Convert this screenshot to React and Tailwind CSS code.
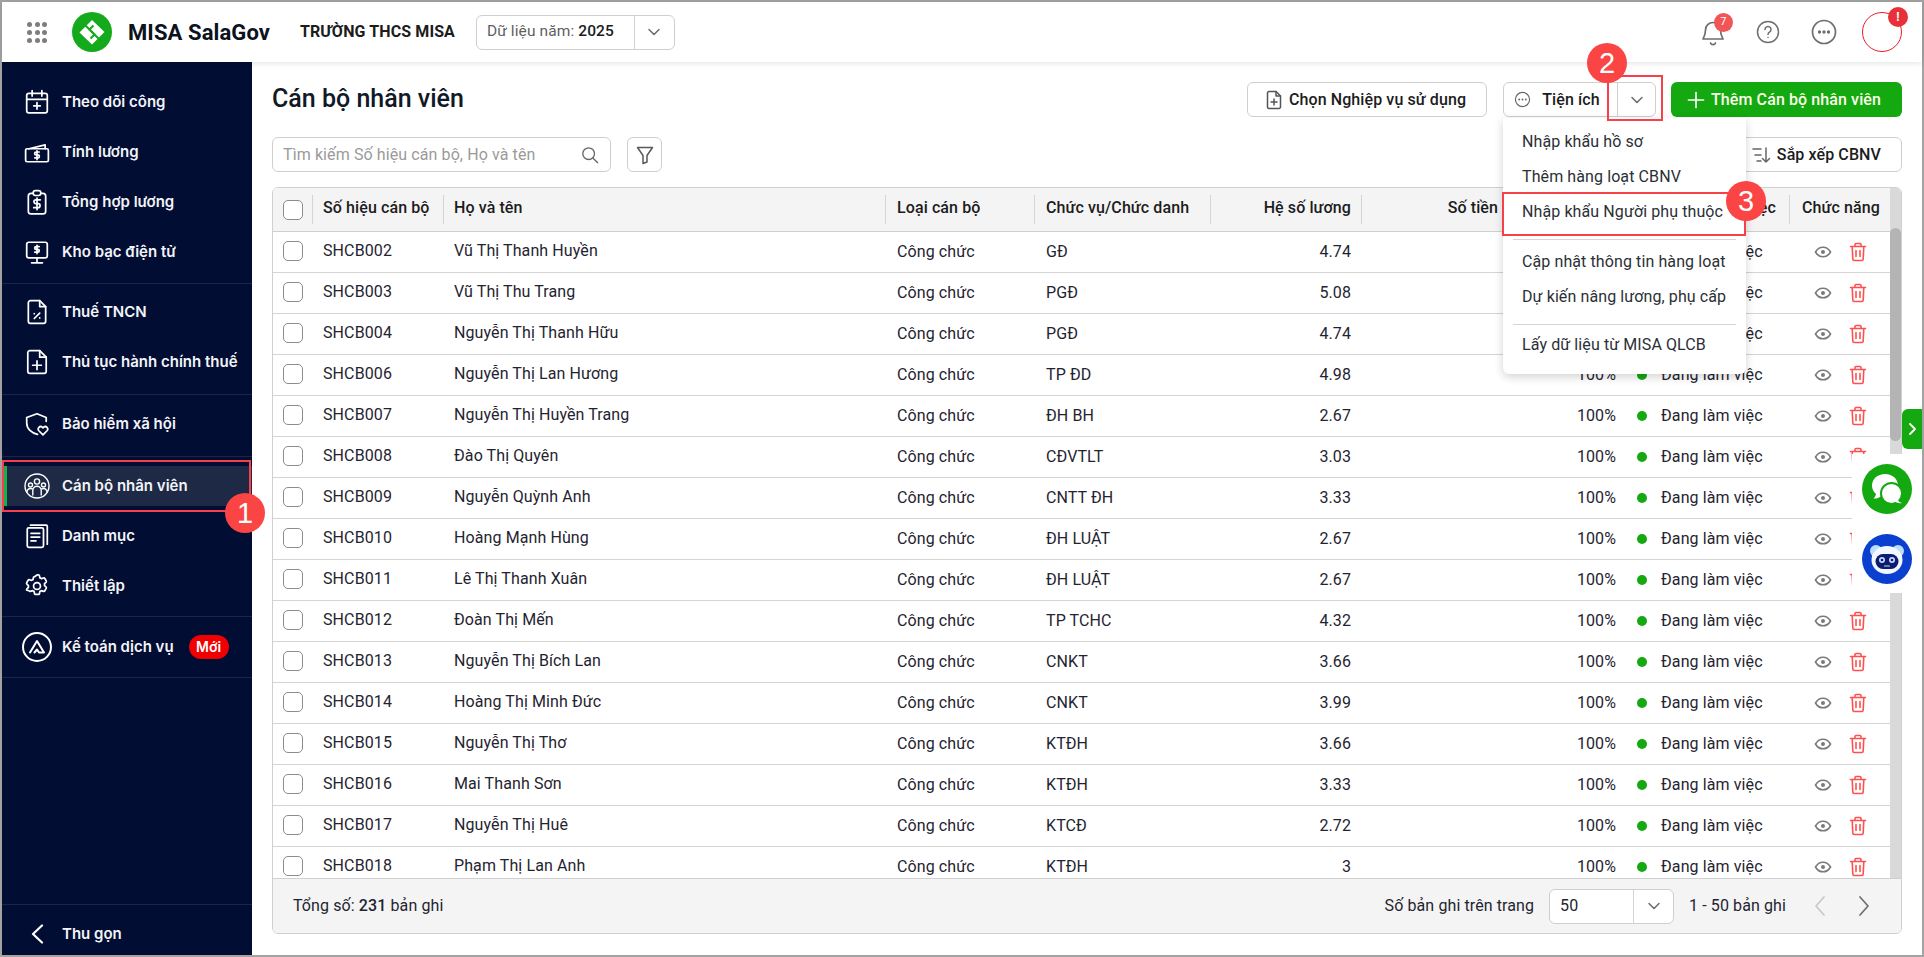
import React from "react";

const rows = [
  ["SHCB002", "Vũ Thị Thanh Huyền", "GĐ", "4.74"],
  ["SHCB003", "Vũ Thị Thu Trang", "PGĐ", "5.08"],
  ["SHCB004", "Nguyễn Thị Thanh Hữu", "PGĐ", "4.74"],
  ["SHCB006", "Nguyễn Thị Lan Hương", "TP ĐD", "4.98"],
  ["SHCB007", "Nguyễn Thị Huyền Trang", "ĐH BH", "2.67"],
  ["SHCB008", "Đào Thị Quyên", "CĐVTLT", "3.03"],
  ["SHCB009", "Nguyễn Quỳnh Anh", "CNTT ĐH", "3.33"],
  ["SHCB010", "Hoàng Mạnh Hùng", "ĐH LUẬT", "2.67"],
  ["SHCB011", "Lê Thị Thanh Xuân", "ĐH LUẬT", "2.67"],
  ["SHCB012", "Đoàn Thị Mến", "TP TCHC", "4.32"],
  ["SHCB013", "Nguyễn Thị Bích Lan", "CNKT", "3.66"],
  ["SHCB014", "Hoàng Thị Minh Đức", "CNKT", "3.99"],
  ["SHCB015", "Nguyễn Thị Thơ", "KTĐH", "3.66"],
  ["SHCB016", "Mai Thanh Sơn", "KTĐH", "3.33"],
  ["SHCB017", "Nguyễn Thị Huê", "KTCĐ", "2.72"],
  ["SHCB018", "Phạm Thị Lan Anh", "KTĐH", "3"],
];

const COLS = "grid grid-cols-[40px_131px_442px_149px_176px_151px_139px_128px_161px_102px]";

const S = ({ children, size = 26, sw = 1.6, color = "currentColor", className = "" }) => (
  <svg width={size} height={size} viewBox="0 0 24 24" fill="none" stroke={color} strokeWidth={sw} strokeLinecap="round" strokeLinejoin="round" className={className}>
    {children}
  </svg>
);

const IconCalendar = () => (
  <S><rect x="2.5" y="4" width="19" height="18" rx="2" /><path d="M2.5 9.5h19M7.5 1.5v5M16.5 1.5v5M12 12.5v6M9 15.5h6" /></S>
);
const IconWallet = () => (
  <S><path d="M4.5 9 19.5 5.5V9" /><rect x="1.5" y="9" width="21" height="12" rx="1.5" /><path d="M14 12h-2.8a1.3 1.3 0 0 0 0 2.7h1.6a1.3 1.3 0 0 1 0 2.7H10M12 11v8" /></S>
);
const IconClip = () => (
  <S><rect x="4" y="4" width="16" height="19" rx="2.5" /><rect x="8.5" y="1.5" width="7" height="4.5" rx="2" fill="#020d33" /><path d="M15 10h-4a1.8 1.8 0 0 0 0 3.6h2a1.8 1.8 0 0 1 0 3.6H9M12 8.5v10.5" /></S>
);
const IconMonitor = () => (
  <S><rect x="2.5" y="3" width="19" height="14.5" rx="2" /><path d="M12 17.5v4M7 22h10M14 7h-2.8a1.3 1.3 0 0 0 0 2.6h1.6a1.3 1.3 0 0 1 0 2.6H10M12 5.8v7.6" /></S>
);
const IconFilePct = () => (
  <S><path d="M14.5 1.5H6a2 2 0 0 0-2 2v17a2 2 0 0 0 2 2h12a2 2 0 0 0 2-2V7z" /><path d="M14.5 1.5V7H20M9.500 18l5-5M9.500 13.500h.01M14.500 17.500h.01" /></S>
);
const IconFilePlus = () => (
  <S><path d="M14.5 1.5H5.5a2 2 0 0 0-2 2v17a2 2 0 0 0 2 2h13a2 2 0 0 0 2-2V7.5z" /><path d="M14.5 1.5v6h6M12 11v8M8 15h8" /></S>
);
const IconShield = () => (
  <S><path d="M12.500 21.500C7 20.500 2.500 16.500 2.500 11V6l9.500-3.500L20.500 6v3.500" /><path d="M17.500 22l-4-4a2.300 2.300 0 0 1 3.200-3.200l.8.700.8-.7a2.300 2.300 0 0 1 3.200 3.200z" fill="#020d33" /></S>
);
const IconGroup = () => (
  <svg width="26" height="26" viewBox="0 0 26 26" fill="none" stroke="currentColor" strokeWidth="1.400" strokeLinecap="round">
    <circle cx="13" cy="13" r="12" />
    <circle cx="13" cy="8.500" r="2.600" />
    <circle cx="6.500" cy="12" r="2" />
    <circle cx="19.500" cy="12" r="2" />
    <path d="M8.800 22v-4.500a4.200 4.200 0 0 1 8.400 0V22M3 19a3.400 3.400 0 0 1 3.500-3.500c.6 0 1 .1 1.500.3M23 19a3.400 3.400 0 0 0-3.500-3.500c-.6 0-1 .1-1.500.3" />
  </svg>
);
const IconDocs = () => (
  <S><rect x="3" y="4.500" width="15" height="18" rx="1.500" /><path d="M6 2h14.500a1 1 0 0 1 1 1v16.500M6.500 9.500h8M6.500 13h8M6.500 16.500h4.500" /></S>
);
const IconGear = () => (
  <S><path d="M12 1.800l1.300 0c.5 0 .9.300 1 .8l.4 1.900c.5.200 1 .4 1.400.7l1.900-.6c.5-.1 1 .1 1.200.5l1.300 2.200c.2.400.2.900-.2 1.300l-1.400 1.300c.1.500.1 1.100 0 1.700l1.400 1.300c.4.300.4.900.2 1.300l-1.300 2.200c-.2.400-.7.600-1.200.5l-1.900-.6c-.4.300-.9.500-1.400.7l-.4 1.900c-.1.500-.5.800-1 .8h-2.600c-.5 0-.9-.300-1-.8l-.4-1.900c-.5-.2-1-.4-1.400-.7l-1.900.6c-.5.100-1-.1-1.200-.5L2.500 15.900c-.2-.4-.2-.9.200-1.300l1.400-1.300c-.1-.6-.1-1.200 0-1.700L2.700 10.200c-.4-.4-.4-.9-.2-1.300l1.300-2.200c.2-.4.700-.6 1.200-.5l1.900.6c.4-.3.9-.5 1.400-.7l.4-1.900c.1-.5.500-.8 1-.8z" /><circle cx="12" cy="12" r="3.200" /></S>
);
const IconAcc = () => (
  <svg width="30" height="30" viewBox="0 0 30 30" fill="none" stroke="currentColor" strokeWidth="2" strokeLinecap="round" strokeLinejoin="round">
    <circle cx="15" cy="15" r="14" />
    <path d="M8 20.500 15 9l7 11.500h-5l-2-3-2.500 3" />
  </svg>
);
const IconBack = () => (
  <svg width="14" height="20" viewBox="0 0 14 20" fill="none" stroke="currentColor" strokeWidth="2.200" strokeLinecap="round" strokeLinejoin="round">
    <path d="M12 1.500 3 10l9 8.500" />
  </svg>
);

const Chevron = ({ size = 16, color = "#6b6b6b" }) => (
  <svg width={size} height={size} viewBox="0 0 16 16" fill="none" stroke={color} strokeWidth="1.500" strokeLinecap="round" strokeLinejoin="round">
    <path d="M3 5.500 8 10.500l5-5" />
  </svg>
);

const Eye = () => (
  <svg width="18" height="18" viewBox="0 0 18 18" fill="none" stroke="#7a7a7a" strokeWidth="1.600">
    <path d="M1.500 9C3.300 5.800 5.900 4.200 9 4.200S14.700 5.800 16.500 9C14.700 12.200 12.100 13.800 9 13.800S3.300 12.200 1.500 9Z" />
    <circle cx="9" cy="9" r="2" fill="#7a7a7a" stroke="none" />
  </svg>
);
const Trash = () => (
  <svg width="18" height="20" viewBox="0 0 18 20" fill="none" stroke="#ff5050" strokeWidth="1.600" strokeLinecap="round" strokeLinejoin="round">
    <path d="M1.500 4.500h15M6 4.500V2.500a1 1 0 0 1 1-1h4a1 1 0 0 1 1 1v2M3.200 4.500l.6 12.500a1.500 1.500 0 0 0 1.500 1.500h7.400a1.500 1.500 0 0 0 1.500-1.500l.6-12.500M7 8.500v6M11 8.500v6" />
  </svg>
);

const Checkbox = () => <span className="block h-5 w-5 rounded-[5px] border border-[#8c8c8c] bg-white" />;

const NavItem = ({ icon, label, className = "", children }) => (
  <div className={`flex h-[50px] items-center ${className}`}>
    <span className="flex w-[60px] shrink-0 justify-center pl-[10px] text-white">{icon}</span>
    <span className="text-[15px] font-semibold tracking-normal whitespace-nowrap text-[#f2f4f8] font-['Inter','Liberation_Sans',sans-serif]">{label}</span>
    {children}
  </div>
);

const Divider = () => <div className="h-px bg-[#1b2645]" />;

const NumberMark = ({ n, className }) => (
  <span className={`absolute z-30 flex h-10 w-10 items-center justify-center rounded-full bg-[#fb4444] text-[29px] leading-none text-white font-['Liberation_Sans',sans-serif] ${className}`}>{n}</span>
);

const HeaderCell = ({ children, className = "", divider = true }) => (
  <div className={`relative flex items-center px-[11px] whitespace-nowrap overflow-hidden ${className}`}>
    {children}
    {divider && <span className="absolute top-[7px] right-0 bottom-[7px] w-px bg-[#d4d4d4]" />}
  </div>
);

export default function App() {
  return (
    <div className="relative h-[957px] w-[1924px] overflow-hidden bg-[#a3a3a3] p-[2px] text-base tracking-[0.1px] text-[#111827] font-['Roboto','Liberation_Sans',sans-serif]">
      <div className="flex h-full w-full flex-col bg-white">
        {/* Top bar */}
        <header className="relative z-10 flex h-[60px] shrink-0 items-center bg-white pr-[20px] pl-[25px] shadow-[0_1px_6px_rgba(0,0,0,0.12)]">
          <div className="grid w-5 grid-cols-3 gap-[3px]">
            {Array.from({ length: 9 }).map((_, i) => (
              <span key={i} className="h-[5px] w-[5px] rounded-full bg-[#7d7d7d]" />
            ))}
          </div>
          <svg width="40" height="40" viewBox="0 0 40 40" className="ml-[25px] shrink-0">
            <circle cx="20" cy="20" r="20" fill="#14aa1c" />
            <polygon points="7.500,20.500 20,8 32.500,20 20,32.500" fill="#fff" />
            <g fill="none" stroke="#14aa1c" strokeWidth="2" strokeLinecap="butt">
              <path d="M12.500 12.500 22.500 22.500 18.500 26.500" />
              <path d="M27.500 27.500 17.500 17.500 21.500 13.500" />
            </g>
          </svg>
          <span className="ml-4 text-[22px] font-bold whitespace-nowrap text-[#0b1220]">MISA SalaGov</span>
          <span className="ml-[30px] text-base font-bold whitespace-nowrap text-[#1c1c1c]">TRƯỜNG THCS MISA</span>
          <div className="ml-[21px] flex h-[35px] w-[199px] items-center rounded-md border border-[#cfcfcf] bg-white">
            <div className="flex-1 pl-[10px] text-[15.5px] whitespace-nowrap text-[#5f5f5f]">
              Dữ liệu năm: <span className="font-medium text-[#1c1c1c]">2025</span>
            </div>
            <div className="flex h-full w-10 items-center justify-center border-l border-[#d4d4d4]">
              <Chevron />
            </div>
          </div>
          <div className="ml-auto flex items-center">
            <span className="relative mr-[31px] block h-6 w-6">
              <svg width="24" height="26" viewBox="0 0 24 26" fill="none" stroke="#6e6e6e" strokeWidth="1.700" strokeLinecap="round" strokeLinejoin="round">
                <path d="M12 2.500a7.500 7.500 0 0 1 7.500 7.500c0 6 2.500 8 2.500 9H2c0-1 2.500-3 2.500-9A7.500 7.500 0 0 1 12 2.500Z" />
                <path d="M9.500 23a2.700 2.700 0 0 0 5 0" />
              </svg>
              <span className="absolute -top-[7px] left-[13px] flex h-[19px] w-[19px] items-center justify-center rounded-full bg-[#f05656] text-[11px] text-white">7</span>
            </span>
            <svg width="24" height="24" viewBox="0 0 24 24" fill="none" stroke="#6e6e6e" strokeWidth="1.500" strokeLinecap="round" className="mr-[31px]">
              <circle cx="12" cy="12" r="10.500" />
              <path d="M9 9.500a3 3 0 1 1 4.500 2.600c-1 .6-1.500 1.200-1.500 2.400M12 17.500h.01" />
            </svg>
            <svg width="26" height="26" viewBox="0 0 26 26" fill="none" stroke="#6e6e6e" strokeWidth="1.700" className="mr-[25px]">
              <circle cx="13" cy="13" r="11.500" />
              <circle cx="8.500" cy="13" r=".8" fill="#6e6e6e" />
              <circle cx="13" cy="13" r=".8" fill="#6e6e6e" />
              <circle cx="17.500" cy="13" r=".8" fill="#6e6e6e" />
            </svg>
            <span className="relative block h-10 w-10 rounded-full border-[1.5px] border-[#ee1c25] bg-white">
              <span className="absolute -top-[6px] -right-[7px] flex h-5 w-5 items-center justify-center rounded-full bg-[#e8303a] text-xs font-bold text-white">!</span>
            </span>
          </div>
        </header>

        <div className="flex min-h-0 flex-1">
          {/* Sidebar */}
          <aside className="flex w-[250px] shrink-0 flex-col bg-[#020d33]">
            <div className="flex flex-col pt-[15px]">
              <NavItem icon={<IconCalendar />} label="Theo dõi công" />
              <NavItem icon={<IconWallet />} label="Tính lương" />
              <NavItem icon={<IconClip />} label="Tổng hợp lương" />
              <NavItem icon={<IconMonitor />} label="Kho bạc điện tử" />
            </div>
            <div className="mt-[6px]"><Divider /></div>
            <div className="pt-[3px] pb-[7px]">
              <NavItem icon={<IconFilePct />} label="Thuế TNCN" />
              <NavItem icon={<IconFilePlus />} label="Thủ tục hành chính thuế" />
            </div>
            <Divider />
            <NavItem className="mt-[4px] mb-[7px]" icon={<IconShield />} label="Bảo hiểm xã hội" />
            <Divider />
            <div className="mt-[9px] flex h-10 items-center border-l-[5px] border-[#14b24c] bg-[#1e2945]">
              <span className="flex w-[55px] shrink-0 justify-center pl-[5px] text-white"><IconGroup /></span>
              <span className="text-[15px] font-semibold tracking-normal whitespace-nowrap text-[#f2f4f8] font-['Inter','Liberation_Sans',sans-serif]">Cán bộ nhân viên</span>
            </div>
            <NavItem className="mt-[5px]" icon={<IconDocs />} label="Danh mục" />
            <NavItem icon={<IconGear />} label="Thiết lập" />
            <div className="mt-[5px]"><Divider /></div>
            <NavItem className="mt-[5px] mb-[5px]" icon={<IconAcc />} label="Kế toán dịch vụ">
              <span className="ml-[15px] flex h-6 w-10 items-center justify-center rounded-full bg-[#f00000] text-sm font-semibold tracking-normal text-white font-['Inter','Liberation_Sans',sans-serif]">Mới</span>
            </NavItem>
            <Divider />
            <div className="mt-auto">
              <Divider />
              <NavItem className="pt-2" icon={<IconBack />} label="Thu gọn" />
            </div>
          </aside>

          {/* Main */}
          <main className="flex min-w-0 flex-1 flex-col px-5 pt-5 pb-[21px]">
            <div className="flex h-[35px] items-center">
              <h1 className="pb-[2px] text-[25px] font-medium tracking-normal whitespace-nowrap text-[#111827]">Cán bộ nhân viên</h1>
              <div className="ml-auto flex items-center">
                <button className="flex h-[35px] w-[240px] items-center justify-center gap-[6px] rounded-md border border-[#cfcfcf] bg-white pr-[3px] font-medium text-[#1c1c1c]">
                  <svg width="18" height="20" viewBox="0 0 18 20" fill="none" stroke="#555" strokeWidth="1.500" strokeLinecap="round" strokeLinejoin="round">
                    <path d="M11 1.500H4a1.500 1.500 0 0 0-1.500 1.500v14A1.500 1.500 0 0 0 4 18.500h10a1.500 1.500 0 0 0 1.500-1.500V6z" />
                    <path d="M11 1.500V6h4.500M9 9v6M6 12h6" />
                  </svg>
                  Chọn Nghiệp vụ sử dụng
                </button>
                <div className="ml-4 flex h-[35px] w-[153px] items-center rounded-md border border-[#cfcfcf] bg-white">
                  <div className="flex flex-1 items-center justify-center gap-[11px] pr-[7px] font-medium text-[#1c1c1c]">
                    <svg width="17" height="17" viewBox="0 0 18 18" fill="none" stroke="#666" strokeWidth="1.200">
                      <circle cx="9" cy="9" r="7.500" />
                      <circle cx="5.500" cy="9" r="1" fill="#666" stroke="none" />
                      <circle cx="9" cy="9" r="1" fill="#666" stroke="none" />
                      <circle cx="12.500" cy="9" r="1" fill="#666" stroke="none" />
                    </svg>
                    Tiện ích
                  </div>
                  <div className="flex h-full w-[38px] items-center justify-center border-l border-[#cfcfcf]">
                    <Chevron />
                  </div>
                </div>
                <button className="ml-[15px] flex h-[35px] w-[231px] items-center justify-center gap-[6px] rounded-md bg-[#14a811] pr-[5px] font-medium text-[#fbffe8]">
                  <svg width="18" height="18" viewBox="0 0 18 18" fill="none" stroke="#fff" strokeWidth="1.700" strokeLinecap="round">
                    <path d="M9 1.500v15M1.500 9h15" />
                  </svg>
                  Thêm Cán bộ nhân viên
                </button>
              </div>
            </div>

            <div className="mt-5 flex h-[35px] items-center">
              <div className="flex h-[35px] w-[339px] items-center justify-between rounded-md border border-[#cfcfcf] bg-white pr-[11px] pl-[10px]">
                <span className="whitespace-nowrap text-[#9a9a9a]">Tìm kiếm Số hiệu cán bộ, Họ và tên</span>
                <svg width="18" height="18" viewBox="0 0 20 20" fill="none" stroke="#666" strokeWidth="1.500" strokeLinecap="round">
                  <circle cx="8.500" cy="8.500" r="6.500" />
                  <path d="m13.500 13.500 5 5" />
                </svg>
              </div>
              <div className="ml-4 flex h-[35px] w-[35px] items-center justify-center rounded-md border border-[#cfcfcf] bg-white">
                <svg width="20" height="20" viewBox="0 0 20 20" fill="none" stroke="#5a5a5a" strokeWidth="1.500" strokeLinejoin="round">
                  <path d="M2.500 2.500h15L12 10.500v6.500l-4 1.500v-8z" />
                </svg>
              </div>
              <button className="ml-auto flex h-[35px] w-[200px] items-center justify-end gap-[6px] rounded-md border border-[#cfcfcf] bg-white pr-[20px] font-medium text-[#1c1c1c]">
                <svg width="20" height="18" viewBox="0 0 20 18" fill="none" stroke="#666" strokeWidth="1.500" strokeLinecap="round" strokeLinejoin="round">
                  <path d="M2 3h8M4 9h6M6 15h4M15 2v14M11.500 12.500 15 16l3.500-3.500" />
                </svg>
                Sắp xếp CBNV
              </button>
            </div>

            {/* Table */}
            <div className="mt-[15px] flex min-h-0 flex-1 flex-col overflow-hidden rounded-md border border-[#d0d0d0]">
              <div className="relative min-h-0 flex-1 overflow-hidden bg-white">
                <div className={`${COLS} h-[44px] border-b border-[#cfcfcf] bg-[#f4f4f4] font-medium text-[#1c1c1c]`}>
                  <HeaderCell className="justify-center !px-0"><Checkbox /></HeaderCell>
                  <HeaderCell className="!pl-[10px] pb-[3px]">Số hiệu cán bộ</HeaderCell>
                  <HeaderCell className="!pl-[10px] pb-[3px]">Họ và tên</HeaderCell>
                  <HeaderCell className="pb-[3px]">Loại cán bộ</HeaderCell>
                  <HeaderCell className="pb-[3px]">Chức vụ/Chức danh</HeaderCell>
                  <HeaderCell className="justify-end pb-[3px]">Hệ số lương</HeaderCell>
                  <HeaderCell className="justify-end !pr-[3px] pb-[3px]" divider={false}>Số tiền</HeaderCell>
                  <HeaderCell divider={false}></HeaderCell>
                  <HeaderCell className="justify-end !pr-[14px] pb-[3px]">Trạng thái làm việc</HeaderCell>
                  <HeaderCell className="justify-center !px-0 pb-[3px]" divider={false}>Chức năng</HeaderCell>
                </div>
                {rows.map((r, i) => (
                  <div key={r[0]} className={`${COLS} h-[41px] border-b border-[#d4d4d4] text-[#1f2430]`}>
                    <div className="flex items-center justify-center pb-[2px]"><Checkbox /></div>
                    <div className="flex items-center pr-[11px] pb-[2px] pl-[10px]">{r[0]}</div>
                    <div className="flex items-center pr-[11px] pb-[2px] pl-[10px]">{r[1]}</div>
                    <div className="flex items-center px-[11px]">Công chức</div>
                    <div className="flex items-center px-[11px]">{r[2]}</div>
                    <div className="flex items-center justify-end px-[11px]">{r[3]}</div>
                    <div />
                    <div className="flex items-center justify-end pr-[13px]">{i > 2 ? "100%" : ""}</div>
                    <div className="flex items-center gap-[14px] pl-[8px] whitespace-nowrap">
                      <span className="h-[10px] w-[10px] rounded-full bg-[#14a811]" />
                      Đang làm việc
                    </div>
                    <div className="flex items-center justify-center gap-[17px] pr-[1px]">
                      <Eye />
                      <Trash />
                    </div>
                  </div>
                ))}
                <div className="absolute top-0 right-0 bottom-0 w-[11px] bg-[#d9d9d9]">
                  <div className="mt-[40px] h-[213px] rounded-t-md rounded-b-md bg-[#b4b4b4]" />
                </div>
              </div>
              <div className="flex h-[55px] shrink-0 items-center border-t border-[#d0d0d0] bg-[#f4f4f4] pr-[30px] pl-[20px] text-[#1f2430]">
                <span>Tổng số: <span className="font-medium">231</span> bản ghi</span>
                <span className="ml-auto">Số bản ghi trên trang</span>
                <div className="ml-[15px] flex h-[35px] w-[125px] items-center rounded-md border border-[#cfcfcf] bg-white">
                  <span className="flex-1 pl-[10px]">50</span>
                  <span className="flex h-full w-10 items-center justify-center border-l border-[#d4d4d4]"><Chevron /></span>
                </div>
                <span className="ml-[15px]">1 - 50 bản ghi</span>
                <svg width="14" height="22" viewBox="0 0 14 22" fill="none" stroke="#c8c8c8" strokeWidth="1.700" strokeLinecap="round" strokeLinejoin="round" className="ml-[27px]">
                  <path d="M11 2 3 11l8 9" />
                </svg>
                <svg width="14" height="22" viewBox="0 0 14 22" fill="none" stroke="#6e6e6e" strokeWidth="1.700" strokeLinecap="round" strokeLinejoin="round" className="ml-[30px]">
                  <path d="m3 2 8 9-8 9" />
                </svg>
              </div>
            </div>
          </main>
        </div>
      </div>

      {/* White patch behind chat buttons */}
      <div className="absolute top-[454px] left-[1852px] z-20 h-[139px] w-[69px] bg-white" />
      {/* Side tab */}
      <div className="absolute top-[409px] left-[1902px] z-20 flex h-10 w-5 items-center justify-center rounded-l-md bg-[#14a811]">
        <svg width="10" height="14" viewBox="0 0 10 14" fill="none" stroke="#fff" strokeWidth="1.800" strokeLinecap="round" strokeLinejoin="round">
          <path d="m3 2 5 5-5 5" />
        </svg>
      </div>
      {/* Chat bubble */}
      <div className="absolute top-[464px] left-[1862px] z-20 h-[50px] w-[50px] rounded-full bg-[#14a811]">
        <svg width="50" height="50" viewBox="0 0 50 50">
          <path d="M23 10c-7.500 0-13 5-13 11.500 0 3.500 1.500 6.500 4 8.600-.3 1.700-1.200 3.200-2.500 4.400 3 .2 5.500-.8 7.500-2.300 1.200.4 2.500.6 4 .6 7.500 0 13-5 13-11.300C36 15 30.500 10 23 10Z" fill="#fff" />
          <circle cx="29.500" cy="29.500" r="10.500" fill="#fff" stroke="#14a811" strokeWidth="2" />
          <path d="M36 36c.5 1.500 2 2.500 4 3-2.500.5-5 0-7-1.500z" fill="#fff" />
        </svg>
      </div>
      {/* Bot */}
      <div className="absolute top-[534px] left-[1862px] z-20 h-[50px] w-[50px] rounded-full bg-[#0b3fd0]">
        <svg width="50" height="50" viewBox="0 0 50 50">
          <circle cx="14" cy="17" r="6" fill="#bcdcfb" />
          <circle cx="36" cy="17" r="6" fill="#bcdcfb" />
          <ellipse cx="25" cy="26" rx="15.500" ry="14" fill="#f3f7ff" />
          <rect x="13.500" y="20" width="23" height="15" rx="7.500" fill="#0a1d6e" />
          <circle cx="20" cy="26" r="3" fill="#c9d6ff" />
          <circle cx="30" cy="26" r="3" fill="#c9d6ff" />
          <circle cx="20" cy="26" r="1.300" fill="#0a1d6e" />
          <circle cx="30" cy="26" r="1.300" fill="#0a1d6e" />
          <path d="M22.500 32h5" stroke="#c9d6ff" strokeWidth="1.200" strokeLinecap="round" />
        </svg>
      </div>

      {/* Dropdown */}
      <div className="absolute top-[118px] left-[1503px] z-20 h-[256px] w-[243px] rounded-b-md bg-white pt-[6px] text-[#2b2f36] shadow-[0_3px_10px_rgba(0,0,0,0.18)]">
        {["Nhập khẩu hồ sơ", "Thêm hàng loạt CBNV", "Nhập khẩu Người phụ thuộc"].map((t) => (
          <div key={t} className="flex h-[35px] items-center pl-[19px] whitespace-nowrap">{t}</div>
        ))}
        <div className="mx-[10px] mt-[10px] mb-[4px] h-px bg-[#d4d4d4]" />
        {["Cập nhật thông tin hàng loạt", "Dự kiến nâng lương, phụ cấp"].map((t) => (
          <div key={t} className="flex h-[35px] items-center pl-[19px] whitespace-nowrap">{t}</div>
        ))}
        <div className="mx-[10px] mt-[10px] mb-[2px] h-px bg-[#d4d4d4]" />
        <div className="flex h-[35px] items-center pl-[19px] whitespace-nowrap">Lấy dữ liệu từ MISA QLCB</div>
      </div>

      {/* Annotation frames */}
      <div className="absolute top-[460px] left-[2px] z-30 h-[52px] w-[249px] border-2 border-[#f6404a]" />
      <div className="absolute top-[75px] left-[1607px] z-30 h-[46px] w-[56px] border-2 border-[#f6404a]" />
      <div className="absolute top-[192px] left-[1502px] z-30 h-[44px] w-[244px] border-2 border-[#f6404a]" />
      <NumberMark n="1" className="top-[493px] left-[225px]" />
      <NumberMark n="2" className="top-[43px] left-[1587px]" />
      <NumberMark n="3" className="top-[181px] left-[1726px]" />
    </div>
  );
}
